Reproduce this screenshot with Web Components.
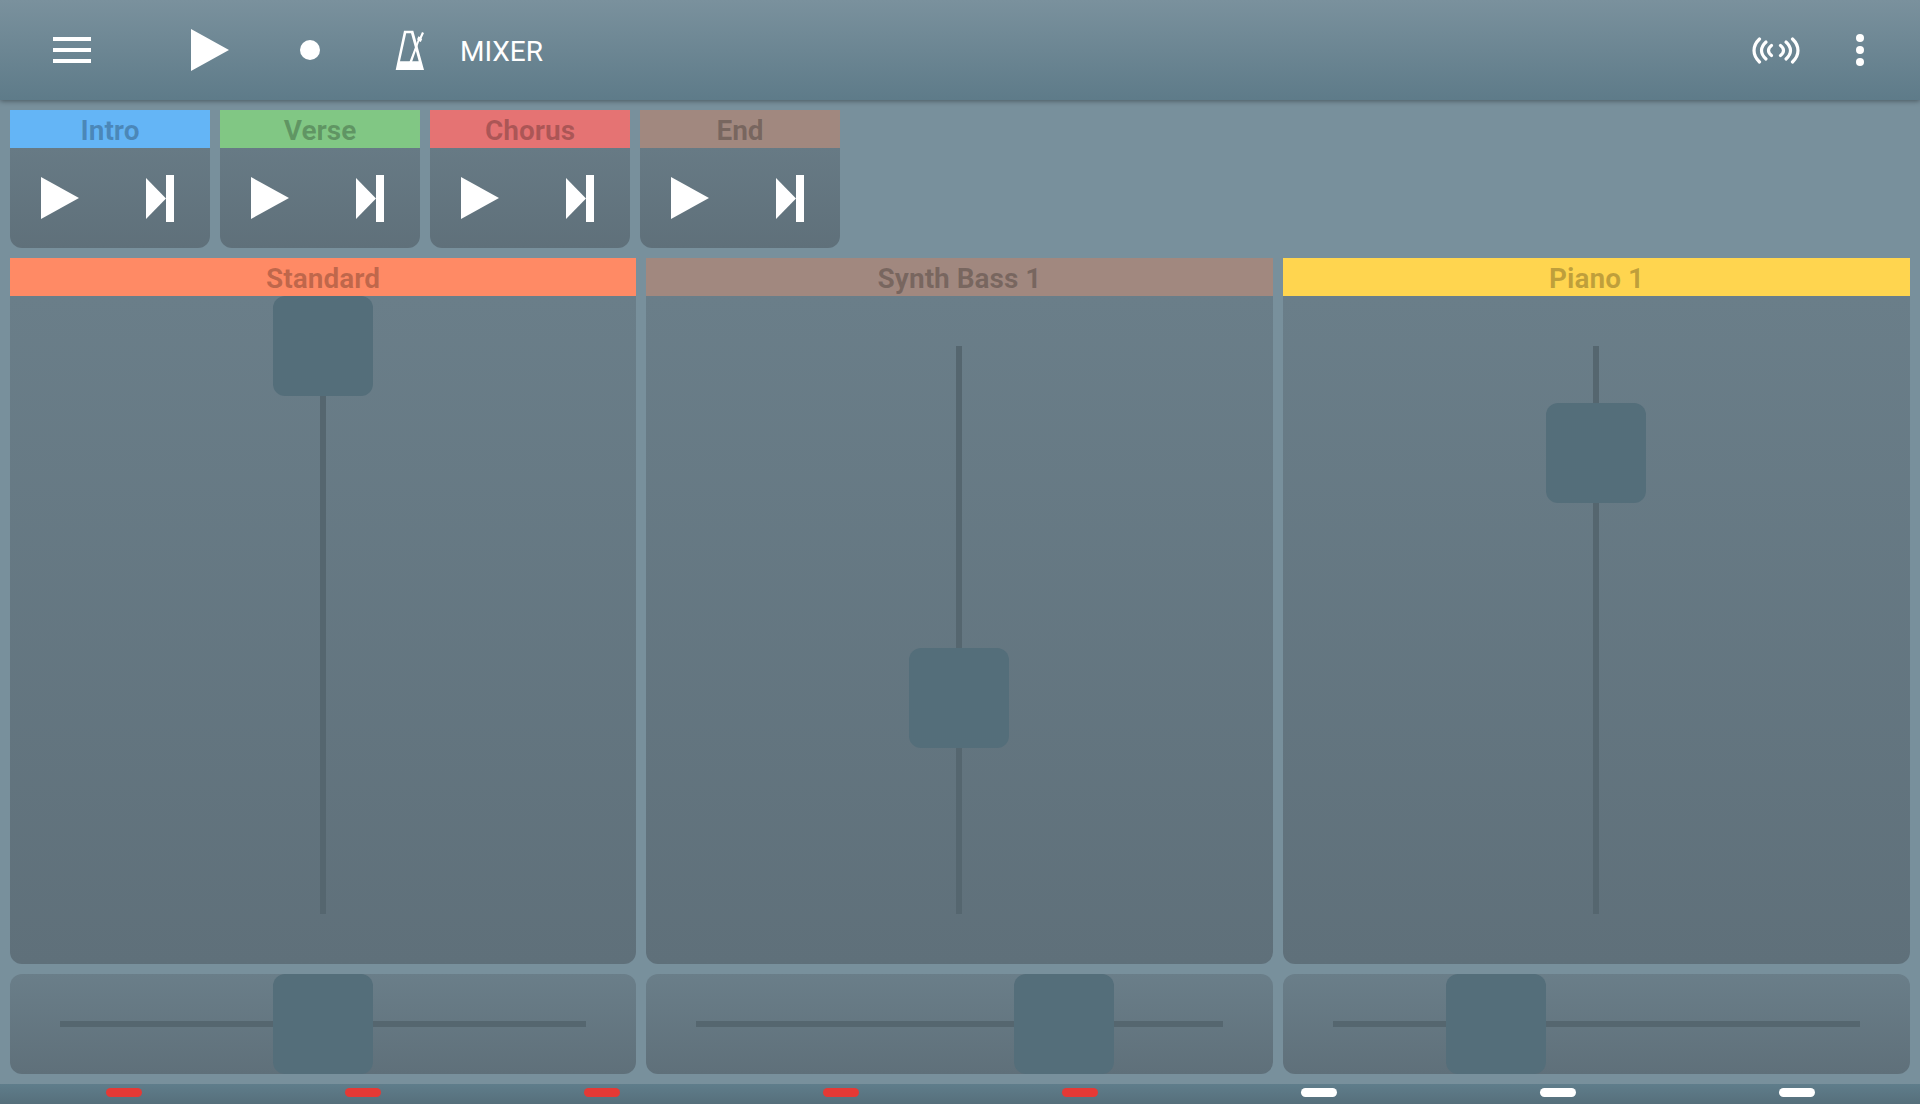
<!DOCTYPE html>
<html>
<head>
<meta charset="utf-8">
<title>Mixer</title>
<style>
  html, body { margin: 0; height: 100%; }
  body {
    background: #78909c;
    font-family: Roboto, "Liberation Sans", sans-serif;
    display: flex;
    flex-direction: column;
    height: 1104px;
    overflow: hidden;
  }
  main {
    flex: 1;
    min-height: 0;
    display: flex;
    flex-direction: column;
    gap: 10px;
    padding: 10px;
  }
  .sections { display: flex; gap: 10px; height: 138px; flex: none; }
  .channels { display: grid; grid-template-columns: 626px 627px 627px; gap: 10px; flex: 1; min-height: 0; }
</style>
</head>
<body>
<app-header>MIXER</app-header>
<main>
  <div class="sections">
    <section-card color="#64b5f6">Intro</section-card>
    <section-card color="#81c784">Verse</section-card>
    <section-card color="#e57373">Chorus</section-card>
    <section-card color="#a1887f">End</section-card>
  </div>
  <div class="channels">
    <mixer-channel color="#ff8a65" volume="0" pan="0.5">Standard</mixer-channel>
    <mixer-channel color="#a1887f" volume="0.62" pan="0.699">Synth Bass 1</mixer-channel>
    <mixer-channel color="#ffd54f" volume="0.188" pan="0.31">Piano 1</mixer-channel>
  </div>
</main>
<page-bar></page-bar>

<script>
class AppHeader extends HTMLElement {
  constructor() {
    super();
    this.shadowDOM = this.attachShadow({ mode: 'open' });
    this.render();
  }

  render() {
    this.shadowDOM.innerHTML = `
      <style>
        :host {
          display: flex;
          flex: none;
          align-items: center;
          height: 100px;
          position: relative;
          z-index: 1;
          background: linear-gradient(#7a919d, #5e7b89);
          box-shadow: 0 1px 5px rgba(0, 0, 0, .4);
          color: #fff;
        }
        svg { display: block; flex: none; fill: #fff; }
        .menu { margin-left: 53px; }
        .play { margin-left: 100px; }
        .rec { margin-left: 71px; }
        .metro { margin-left: 75px; }
        .title {
          margin-left: 35px;
          font-size: 28px;
          line-height: 1;
          padding-top: 4px;
          white-space: nowrap;
        }
        .radio { margin-left: auto; }
        .more { margin-left: 56px; margin-right: 56px; }
      </style>
      <svg class="menu" width="38" height="26" viewBox="0 0 38 26">
        <rect y="0" width="38" height="4"/><rect y="11" width="38" height="4"/><rect y="22" width="38" height="4"/>
      </svg>
      <svg class="play" width="38" height="42" viewBox="0 0 38 42"><path d="M0 0 38 21 0 42Z"/></svg>
      <svg class="rec" width="20" height="20" viewBox="0 0 20 20"><circle cx="10" cy="10" r="10"/></svg>
      <svg class="metro" width="30" height="40" viewBox="0 0 30 40">
        <path fill-rule="evenodd" d="M9 .7H18.300L29 40H.7ZM11.200 3.300 5 31.300H23.700L16 3.300Z"/>
        <path d="M27 2 29 3 26.500 8.600 27.200 9 25.800 12 24.200 11.300 17 32H14.400L22.800 9.800 22 9.400 23.400 6.300 24.800 7Z"/>
      </svg>
      <span class="title"><slot></slot></span>
      <svg class="radio" width="48" height="27" viewBox="0 0 48 27" style="fill:none" stroke="#fff" stroke-width="3.200" stroke-linecap="round">
        <path d="M7.500 2C.2 9 .2 18 7.500 25"/><path d="M14 5C8 10.500 8 16.500 14 22"/><path d="M19.500 8.500C15.500 11.500 15.500 15.500 19.500 18.500"/>
        <path d="M40.500 2C47.800 9 47.800 18 40.500 25"/><path d="M34 5C40 10.500 40 16.500 34 22"/><path d="M28.500 8.500C32.500 11.500 32.500 15.500 28.500 18.500"/>
      </svg>
      <svg class="more" width="8" height="32" viewBox="0 0 8 32">
        <circle cx="4" cy="4" r="4"/><circle cx="4" cy="16" r="4"/><circle cx="4" cy="28" r="4"/>
      </svg>
    `;
  }
}

class SectionCard extends HTMLElement {
  constructor() {
    super();
    this.shadowDOM = this.attachShadow({ mode: 'open' });
    this.render();
  }

  render() {
    this.shadowDOM.innerHTML = `
      <style>
        :host {
          display: flex;
          flex-direction: column;
          width: 200px;
          border-radius: 0 0 12px 12px;
          overflow: hidden;
          background: linear-gradient(#6a7e89, #5f707a);
        }
        .name {
          height: 36px;
          padding-top: 2px;
          text-align: center;
          font: 700 28px/38px Roboto, sans-serif;
          color: rgba(0, 0, 0, .25);
          background: ${this.getAttribute('color')};
        }
        .body { flex: 1; display: flex; align-items: center; }
        svg { display: block; fill: #fff; }
        .start { margin-left: 31px; }
        .next { margin-left: 67px; }
      </style>
      <div class="name"><slot></slot></div>
      <div class="body">
        <svg class="start" width="38" height="42" viewBox="0 0 38 42"><path d="M0 0 38 21 0 42Z"/></svg>
        <svg class="next" width="28" height="47" viewBox="0 0 28 47">
          <path d="M0 3 20 23.500 0 44Z"/><rect x="20" width="8" height="47"/>
        </svg>
      </div>
    `;
  }
}

class FaderControl extends HTMLElement {
  constructor() {
    super();
    this.shadowDOM = this.attachShadow({ mode: 'open' });
    this.render();
  }

  render() {
    const value = this.getAttribute('value');
    const across = this.hasAttribute('horizontal');
    this.shadowDOM.innerHTML = `
      <style>
        :host {
          display: block;
          position: relative;
          background: linear-gradient(#6a7e89, #5f707a);
          padding: ${across ? '47px 50px' : '50px 0 50px 310px'};
          box-sizing: border-box;
        }
        :host([horizontal]) { height: 100px; border-radius: 12px; }
        :host(:not([horizontal])) { flex: 1; border-radius: 0 0 12px 12px; display: flex; }
        .track {
          position: relative;
          background: #55666f;
          ${across ? 'height: 6px;' : 'width: 6px;'}
        }
        .thumb {
          position: absolute;
          width: 100px;
          height: 100px;
          border-radius: 12px;
          background: #546e7a;
          ${across
            ? `left: calc(${value} * 100% - 50px); top: -47px;`
            : `top: calc(${value} * 100% - 50px); left: -47px;`}
        }
      </style>
      <div class="track"><div class="thumb"></div></div>
    `;
  }
}

class MixerChannel extends HTMLElement {
  constructor() {
    super();
    this.shadowDOM = this.attachShadow({ mode: 'open' });
    this.render();
  }

  render() {
    this.shadowDOM.innerHTML = `
      <style>
        :host { display: flex; flex-direction: column; gap: 10px; min-width: 0; }
        .strip { flex: 1; display: flex; flex-direction: column; min-height: 0; }
        .name {
          height: 36px;
          padding-top: 2px;
          flex: none;
          text-align: center;
          font: 700 28px/38px Roboto, sans-serif;
          color: rgba(0, 0, 0, .25);
          background: ${this.getAttribute('color')};
        }
      </style>
      <div class="strip">
        <div class="name"><slot></slot></div>
        <fader-control value="${this.getAttribute('volume')}"></fader-control>
      </div>
      <fader-control horizontal value="${this.getAttribute('pan')}"></fader-control>
    `;
  }
}

class PageBar extends HTMLElement {
  constructor() {
    super();
    this.shadowDOM = this.attachShadow({ mode: 'open' });
    this.render();
  }

  render() {
    const pills = [0, 1, 2, 3, 4, 5, 6, 7]
      .map((i) => `<span class="${i < 5 ? 'on' : ''}"></span>`)
      .join('');
    this.shadowDOM.innerHTML = `
      <style>
        :host {
          display: grid;
          grid-template-columns: repeat(8, 1fr);
          justify-items: center;
          align-items: start;
          flex: none;
          height: 20px;
          padding: 4px 4px 0;
          box-sizing: border-box;
          background: linear-gradient(#5f7d8b, #566f7b);
        }
        span { display: block; width: 36px; height: 9px; border-radius: 5px; background: #fff; }
        span.on { background: #e53935; }
      </style>
      ${pills}
    `;
  }
}

customElements.define('app-header', AppHeader);
customElements.define('section-card', SectionCard);
customElements.define('fader-control', FaderControl);
customElements.define('mixer-channel', MixerChannel);
customElements.define('page-bar', PageBar);
</script>
</body>
</html>
